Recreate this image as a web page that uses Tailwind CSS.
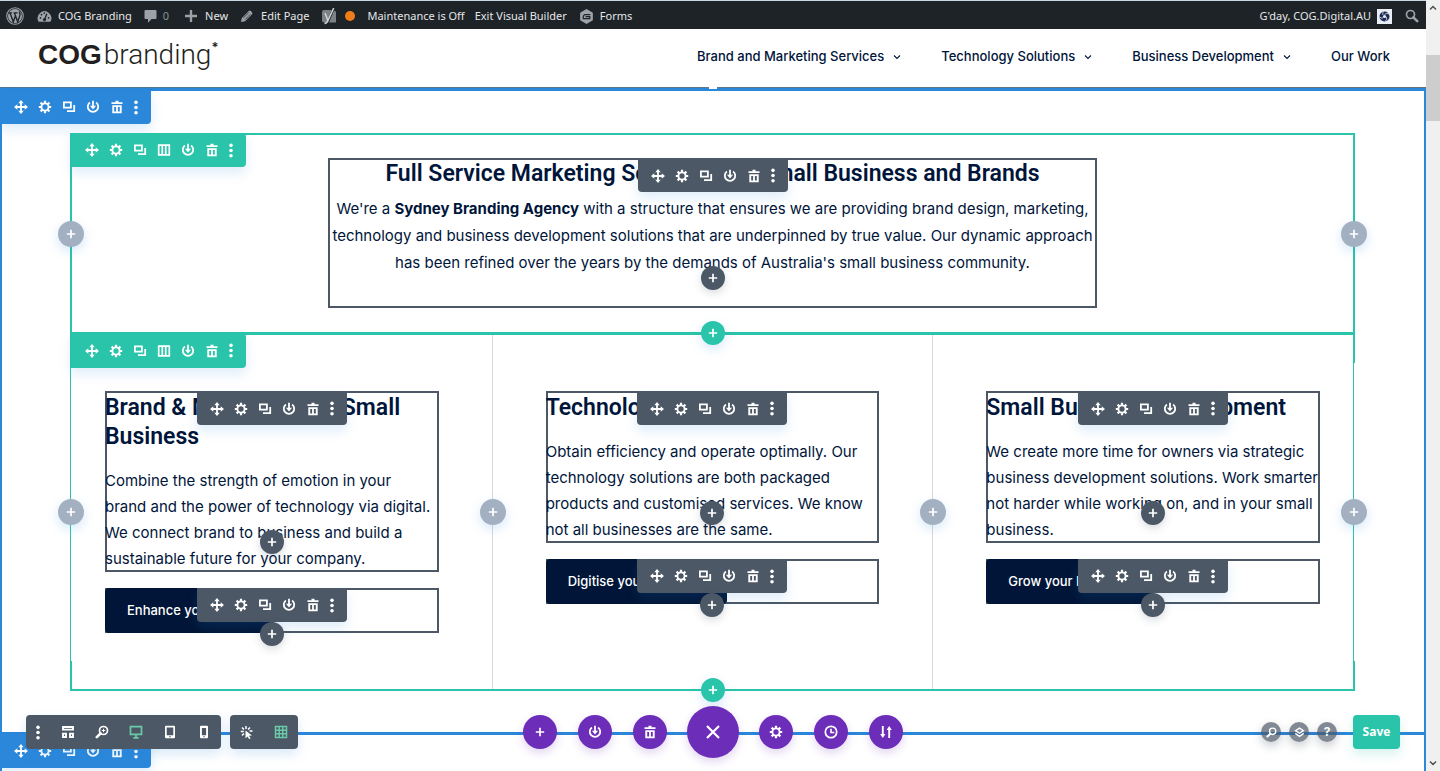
<!DOCTYPE html>
<html lang="en">
<head>
<meta charset="utf-8">
<meta name="viewport" content="width=device-width, initial-scale=1">
<title>COG Branding</title>
<script src="https://cdn.jsdelivr.net/npm/@tailwindcss/browser@4"></script>
</head>
<body class="flex h-screen overflow-hidden bg-white font-['Inter',sans-serif] text-[#00153a]">

<svg class="hidden" aria-hidden="true">
  <symbol id="move" viewBox="0 0 14 14"><path d="M7 2v10M2 7h10" stroke="currentColor" stroke-width="1.8"/><path d="M7 0l2.7 3.3H4.3zM7 14l2.700-3.300H4.300zM0 7l3.300-2.700v5.400zM14 7l-3.300-2.700v5.400z" fill="currentColor"/></symbol>
  <symbol id="gear" viewBox="0 0 14 14"><circle cx="7" cy="7" r="3.600" fill="none" stroke="currentColor" stroke-width="1.900"/><path d="M7 .8v2.400M7 10.800v2.400M.8 7h2.400M10.800 7h2.400M2.600 2.600l1.700 1.700M9.700 9.700l1.700 1.700M2.600 11.400l1.700-1.700M9.700 4.300l1.700-1.700" stroke="currentColor" stroke-width="2.200"/></symbol>
  <symbol id="copy" viewBox="0 0 14 14"><path d="M1.900 2.400h7v5.200h-7z" fill="none" stroke="currentColor" stroke-width="1.800"/><path d="M5 11.200h7.200V5" fill="none" stroke="currentColor" stroke-width="1.800"/></symbol>
  <symbol id="cols" viewBox="0 0 14 14"><path d="M1.700 2.200h10.600v9.600H1.700zM5.300 2v10M8.700 2v10" fill="none" stroke="currentColor" stroke-width="1.700"/></symbol>
  <symbol id="power" viewBox="0 0 14 14"><path d="M3.900 2.500a5.200 5.200 0 1 0 6.200 0" fill="none" stroke="currentColor" stroke-width="1.800"/><path d="M7 .8v6" stroke="currentColor" stroke-width="1.800"/><path d="M3.900 5.800h6.200L7 9.600z" fill="currentColor"/></symbol>
  <symbol id="trash" viewBox="0 0 14 14"><path d="M5.500.8h3v1.400h4v1.900h-11V2.200h4z" fill="currentColor"/><path d="M2.300 5.300h9.400v8H2.300zM4.200 7.100v4.400h1.900V7.100zM7.900 7.100v4.400h1.900V7.100z" fill="currentColor" fill-rule="evenodd"/></symbol>
  <symbol id="dots" viewBox="0 0 6 16"><circle cx="3" cy="2.500" r="1.900" fill="currentColor"/><circle cx="3" cy="8" r="1.900" fill="currentColor"/><circle cx="3" cy="13.500" r="1.900" fill="currentColor"/></symbol>
  <symbol id="plus" viewBox="0 0 10 10"><path d="M5 .8v8.400M.8 5h8.400" stroke="currentColor" stroke-width="1.700"/></symbol>
  <symbol id="chev" viewBox="0 0 8 8"><path d="M1 2.500l3 3 3-3" fill="none" stroke="currentColor" stroke-width="1.100"/></symbol>
  <symbol id="lens" viewBox="0 0 14 14"><circle cx="8.500" cy="5.500" r="4" fill="none" stroke="currentColor" stroke-width="1.700"/><path d="M5.600 8.400L1.800 12.200" stroke="currentColor" stroke-width="2.600" stroke-linecap="round"/></symbol>
</svg>

<div class="relative flex min-w-0 flex-1 flex-col">

  <!-- Admin bar -->
  <nav class="flex h-[29px] shrink-0 items-center justify-between border-t border-[#c9d6e4] bg-[#1d2327] pt-0.5 pr-[7px] pl-1.5 font-['Noto_Sans',sans-serif] text-[11px] text-[#e6e7e8]">
    <div class="flex items-center">
      <a href="#" aria-label="WordPress" class="text-[#9ca2a7]"><svg class="h-[18px] w-[18px]" viewBox="0 0 20 20"><circle cx="10" cy="10" r="9.200" fill="none" stroke="currentColor" stroke-width="1.200"/><circle cx="10" cy="10" r="7.800" fill="currentColor"/><path d="M2.800 6.500h4M8.400 6.500h4.400M4.400 6.500l3.700 10 2-6M9.300 6.500l3.700 10 2.500-7.500c.5-2-.8-2.500-.8-4" fill="none" stroke="#1d2327" stroke-width="1.500"/></svg></a>
      <a href="#" class="ml-[13px] flex items-center gap-1.5"><svg class="h-[15px] w-[15px] text-[#9ca2a7]" viewBox="0 0 16 16"><path d="M1.700 13.500A7.300 7.300 0 1 1 14.300 13.500z" fill="currentColor"/><path d="M8 11.500L10.500 5" stroke="#1d2327" stroke-width="1.400"/><circle cx="8" cy="11.300" r="1.700" fill="#1d2327"/><g fill="#1d2327"><circle cx="3.700" cy="9.500" r=".9"/><circle cx="4.800" cy="6" r=".9"/><circle cx="7.800" cy="4.300" r=".9"/><circle cx="12.300" cy="9.500" r=".9"/></g></svg>COG Branding</a>
      <a href="#" class="ml-3 flex items-center gap-1.5 text-[#8b9196]"><svg class="h-[13px] w-[13px] text-[#9ca2a7]" viewBox="0 0 13 13"><path d="M1.500 0h10q1 0 1 1v7q0 1-1 1H7.500L4 12.800V9H1.500q-1 0-1-1V1q0-1 1-1z" fill="currentColor"/></svg>0</a>
      <a href="#" class="ml-4 flex items-center gap-2"><svg class="h-3 w-3 text-[#9ca2a7]" viewBox="0 0 10 10"><path d="M5 0v10M0 5h10" stroke="currentColor" stroke-width="2"/></svg>New</a>
      <a href="#" class="ml-3 flex items-center gap-2"><svg class="h-[13px] w-[13px] text-[#9ca2a7]" viewBox="0 0 14 14"><path d="M1 13l1-4.500L9.500 1q1.200-.8 2.200.2l1.100 1.100q1 1 .2 2.200L5.500 12z" fill="currentColor"/><path d="M3.600 8.600L9.500 2.700M5.400 10.400l5.900-5.900" stroke="#1d2327" stroke-width=".8"/></svg>Edit Page</a>
      <a href="#" aria-label="Yoast SEO" class="ml-3 flex items-center gap-2"><svg class="h-[17px] w-4 text-[#9ca2a7]" viewBox="0 0 16 17"><path d="M3 2h7.500L6 14.500H3q-2 0-2-2V4q0-2 2-2zM13 2.500q2 .5 2 2v10H8z" fill="currentColor" opacity=".75"/><path d="M4 5l3 7.500L12.700 0M7 12q-1 3.500-3.500 3.500" fill="none" stroke="#cfd2d4" stroke-width="1.500"/></svg><span class="h-2.5 w-2.5 rounded-full bg-[#ee7c1b]"></span></a>
      <a href="#" class="ml-3">Maintenance is Off</a>
      <a href="#" class="ml-2.5">Exit Visual Builder</a>
      <a href="#" class="ml-3 flex items-center gap-1.5"><svg class="h-[15px] w-[15px]" viewBox="0 0 16 16"><path d="M8 0l6.800 4v8L8 16l-6.800-4V4z" fill="#9ca2a7"/><path d="M12 6H6.500Q4.500 6 4.500 10.300h7V8.200H7" fill="none" stroke="#1d2327" stroke-width="1.300"/></svg>Forms</a>
    </div>
    <div class="flex items-center">
      <a href="#" class="flex items-center gap-1.5">G'day, COG.Digital.AU <svg class="h-[15px] w-[15px]" viewBox="0 0 15 15"><path d="M0 0h15v15H0z" fill="#e9eef6"/><circle cx="7.500" cy="7.500" r="5" fill="#1b2b52"/><circle cx="7.500" cy="7.500" r="1.600" fill="#e9eef6"/><path d="M7.500 5.500q2-2 4.500-.5M9.400 8q1.200 2.500-1 4M6 9Q3.500 9.800 2.600 7.500M6 6Q5 4 6.500 2.500" fill="none" stroke="#e9eef6" stroke-width=".8"/></svg></a>
      <button aria-label="Search" class="ml-[13px] text-[#9ca2a7]"><svg class="h-3.5 w-3.5 -scale-x-100" viewBox="0 0 14 14"><use href="#lens"/></svg></button>
    </div>
  </nav>

  <!-- Site header -->
  <header class="z-10 flex h-[58px] shrink-0 items-center justify-between bg-white pr-9 pb-0.5 pl-[38px]">
    <a href="#" class="flex items-baseline pb-1 text-[28px] leading-none text-[#231f20]"><span class="font-['Liberation_Sans',sans-serif] font-bold">COG</span><span class="ml-0.5 font-['Roboto',sans-serif] font-light">branding</span><span class="self-start text-[13px] leading-none font-semibold">*</span></a>
    <nav class="flex items-center gap-10 text-[13px] font-medium">
      <a href="#" class="flex items-center gap-[9px]">Brand and Marketing Services <svg class="h-2 w-2"><use href="#chev"/></svg></a>
      <a href="#" class="flex items-center gap-[9px]">Technology Solutions <svg class="h-2 w-2"><use href="#chev"/></svg></a>
      <a href="#" class="flex items-center gap-[9px]">Business Development <svg class="h-2 w-2"><use href="#chev"/></svg></a>
      <a href="#">Our Work</a>
    </nav>
  </header>

  <main class="flex min-h-0 flex-1 flex-col">
    <section class="relative shrink-0 border-x-2 border-t-4 border-[#2b87da] pt-[42px] pr-[69px] pb-[41px] pl-[68px]">
      <span class="absolute -inset-x-0.5 -top-1 h-px bg-linear-to-r from-[#4d7896] via-[#5f7788] to-[#66727a]"></span>
      <span class="absolute -top-1 left-1/2 h-0.5 w-2 -translate-x-1/2 bg-white"></span>
      <div data-tools="section" class="absolute -top-px -left-0.5 z-10 flex h-[34px] items-center rounded-br-sm bg-[#2b87da] pr-2 pl-[9px] text-white shadow-[0_6px_12px_rgba(43,135,218,.15)]"></div>

      <!-- Intro row -->
      <div class="relative border-x-2 border-t-2 border-b border-[#29c4a9] pt-[23px] pb-6">
        <div data-tools="row" class="absolute -top-0.5 -left-px z-10 flex h-[34px] items-center rounded-r-sm bg-[#29c4a9] pr-2 pl-[9px] text-white shadow-[0_6px_12px_rgba(43,135,218,.15)]"></div>
        <button data-add class="absolute top-1/2 -left-3.5 z-10 flex h-[26px] w-[26px] -translate-y-1/2 items-center justify-center rounded-full bg-[#a2b0c1] text-white shadow-[0_4px_12px_rgba(43,135,218,.2)]"></button>
        <button data-add class="absolute top-1/2 -right-3.5 z-10 flex h-[26px] w-[26px] -translate-y-1/2 items-center justify-center rounded-full bg-[#a2b0c1] text-white shadow-[0_4px_12px_rgba(43,135,218,.2)]"></button>
        <article class="relative mx-auto h-[150px] w-3/5 text-center ring-2 ring-[#4c5866] ring-inset">
          <h2 class="font-['Roboto',sans-serif] text-[23px] leading-[32px] font-semibold">Full Service Marketing Solutions for Small Business and Brands</h2>
          <p class="pt-[5px] text-[15px] leading-[27px]">We're a <strong>Sydney Branding Agency</strong> with a structure that ensures we are providing brand design, marketing,<br>technology and business development solutions that are underpinned by true value. Our dynamic approach<br>has been refined over the years by the demands of Australia's small business community.</p>
          <div data-tools="module" class="absolute top-px left-1/2 flex h-[33px] -translate-x-1/2 items-center rounded-b-sm bg-[#4c5866] pr-2 pl-2 text-white shadow-[0_6px_12px_rgba(43,135,218,.15)]"></div>
          <button data-add class="absolute bottom-[18px] left-1/2 flex h-6 w-6 -translate-x-1/2 items-center justify-center rounded-full bg-[#4c5866] text-white shadow-[0_3px_8px_rgba(60,70,90,.2)]"></button>
        </article>
        <button data-add class="absolute -bottom-[13px] left-1/2 z-20 flex h-6 w-6 -translate-x-1/2 items-center justify-center rounded-full bg-[#29c4a9] text-white shadow-[0_4px_12px_rgba(43,135,218,.2)]"></button>
      </div>

      <!-- Services row -->
      <div class="relative border-2 border-[#29c4a9] px-[33px] py-14">
        <span class="absolute inset-y-7 -left-px w-px bg-white"></span>
        <span class="absolute inset-y-7 -right-0.5 w-px bg-white"></span>
        <div data-tools="row" class="absolute -top-0.5 -left-px z-10 flex h-[35px] items-center rounded-r-sm bg-[#29c4a9] pr-2 pl-[9px] text-white shadow-[0_6px_12px_rgba(43,135,218,.15)]"></div>
        <button data-add class="absolute top-1/2 -left-3.5 z-10 flex h-[26px] w-[26px] -translate-y-1/2 items-center justify-center rounded-full bg-[#a2b0c1] text-white shadow-[0_4px_12px_rgba(43,135,218,.2)]"></button>
        <button data-add class="absolute top-1/2 -right-3.5 z-10 flex h-[26px] w-[26px] -translate-y-1/2 items-center justify-center rounded-full bg-[#a2b0c1] text-white shadow-[0_4px_12px_rgba(43,135,218,.2)]"></button>

        <div class="grid grid-cols-3 gap-[107px]">
          <div class="relative flex flex-col gap-4">
            <span class="absolute -inset-y-14 -right-[54px] w-px bg-[#d8d8d8]"></span>
            <button data-add class="absolute top-[108px] -right-[67px] flex h-[26px] w-[26px] items-center justify-center rounded-full bg-[#a2b0c1] text-white shadow-[0_4px_12px_rgba(43,135,218,.2)]"></button>
            <article class="relative pt-0.5 ring-2 ring-[#4c5866] ring-inset">
              <h3 class="font-['Roboto',sans-serif] text-[23px] leading-[29px] font-semibold">Brand &amp; Marketing For Small Business</h3>
              <p class="pt-[17px] text-[15px] leading-[26px]">Combine the strength of emotion in your<br>brand and the power of technology via digital.<br>We connect brand to business and build a<br>sustainable future for your company.</p>
              <div data-tools="module" class="absolute top-px left-1/2 flex h-[33px] -translate-x-1/2 items-center rounded-b-sm bg-[#4c5866] pr-2 pl-2 text-white shadow-[0_6px_12px_rgba(43,135,218,.15)]"></div>
              <button data-add class="absolute bottom-[18px] left-1/2 flex h-6 w-6 -translate-x-1/2 items-center justify-center rounded-full bg-[#4c5866] text-white shadow-[0_3px_8px_rgba(60,70,90,.2)]"></button>
            </article>
            <article class="relative flex h-[45px] ring-2 ring-[#4c5866] ring-inset">
              <a href="#" class="flex items-center rounded-sm bg-[#001537] px-[22px] text-[13px] font-medium text-white">Enhance your Brand</a>
              <div data-tools="module" class="absolute top-0 left-1/2 flex h-[34px] -translate-x-1/2 items-center rounded-b-sm bg-[#4c5866] pr-2 pl-2 text-white shadow-[0_6px_12px_rgba(43,135,218,.15)]"></div>
              <button data-add class="absolute -bottom-[13px] left-1/2 flex h-6 w-6 -translate-x-1/2 items-center justify-center rounded-full bg-[#4c5866] text-white shadow-[0_3px_8px_rgba(60,70,90,.2)]"></button>
            </article>
          </div>

          <div class="relative flex flex-col gap-4">
            <span class="absolute -inset-y-14 -right-[54px] w-px bg-[#d8d8d8]"></span>
            <button data-add class="absolute top-[108px] -right-[67px] flex h-[26px] w-[26px] items-center justify-center rounded-full bg-[#a2b0c1] text-white shadow-[0_4px_12px_rgba(43,135,218,.2)]"></button>
            <article class="relative pt-0.5 ring-2 ring-[#4c5866] ring-inset">
              <h3 class="font-['Roboto',sans-serif] text-[23px] leading-[29px] font-semibold">Technology Solutions</h3>
              <p class="pt-[17px] text-[15px] leading-[26px]">Obtain efficiency and operate optimally. Our<br>technology solutions are both packaged<br>products and customised services. We know<br>not all businesses are the same.</p>
              <div data-tools="module" class="absolute top-px left-1/2 flex h-[33px] -translate-x-1/2 items-center rounded-b-sm bg-[#4c5866] pr-2 pl-2 text-white shadow-[0_6px_12px_rgba(43,135,218,.15)]"></div>
              <button data-add class="absolute bottom-[18px] left-1/2 flex h-6 w-6 -translate-x-1/2 items-center justify-center rounded-full bg-[#4c5866] text-white shadow-[0_3px_8px_rgba(60,70,90,.2)]"></button>
            </article>
            <article class="relative flex h-[45px] ring-2 ring-[#4c5866] ring-inset">
              <a href="#" class="flex items-center rounded-sm bg-[#001537] px-[22px] text-[13px] font-medium text-white">Digitise your Business</a>
              <div data-tools="module" class="absolute top-0 left-1/2 flex h-[34px] -translate-x-1/2 items-center rounded-b-sm bg-[#4c5866] pr-2 pl-2 text-white shadow-[0_6px_12px_rgba(43,135,218,.15)]"></div>
              <button data-add class="absolute -bottom-[13px] left-1/2 flex h-6 w-6 -translate-x-1/2 items-center justify-center rounded-full bg-[#4c5866] text-white shadow-[0_3px_8px_rgba(60,70,90,.2)]"></button>
            </article>
          </div>

          <div class="relative flex flex-col gap-4">
            <article class="relative pt-0.5 ring-2 ring-[#4c5866] ring-inset">
              <h3 class="font-['Roboto',sans-serif] text-[23px] leading-[29px] font-semibold">Small Business Development</h3>
              <p class="pt-[17px] text-[15px] leading-[26px] whitespace-nowrap">We create more time for owners via strategic<br>business development solutions. Work smarter<br>not harder while working on, and in your small<br>business.</p>
              <div data-tools="module" class="absolute top-px left-1/2 flex h-[33px] -translate-x-1/2 items-center rounded-b-sm bg-[#4c5866] pr-2 pl-2 text-white shadow-[0_6px_12px_rgba(43,135,218,.15)]"></div>
              <button data-add class="absolute bottom-[18px] left-1/2 flex h-6 w-6 -translate-x-1/2 items-center justify-center rounded-full bg-[#4c5866] text-white shadow-[0_3px_8px_rgba(60,70,90,.2)]"></button>
            </article>
            <article class="relative flex h-[45px] ring-2 ring-[#4c5866] ring-inset">
              <a href="#" class="flex items-center rounded-sm bg-[#001537] px-[22px] text-[13px] font-medium text-white">Grow your Business</a>
              <div data-tools="module" class="absolute top-0 left-1/2 flex h-[34px] -translate-x-1/2 items-center rounded-b-sm bg-[#4c5866] pr-2 pl-2 text-white shadow-[0_6px_12px_rgba(43,135,218,.15)]"></div>
              <button data-add class="absolute -bottom-[13px] left-1/2 flex h-6 w-6 -translate-x-1/2 items-center justify-center rounded-full bg-[#4c5866] text-white shadow-[0_3px_8px_rgba(60,70,90,.2)]"></button>
            </article>
          </div>
        </div>
        <button data-add class="absolute -bottom-[13px] left-1/2 z-20 flex h-6 w-6 -translate-x-1/2 items-center justify-center rounded-full bg-[#29c4a9] text-white shadow-[0_4px_12px_rgba(43,135,218,.2)]"></button>
      </div>
    </section>

    <section class="relative min-h-0 flex-1 border-x-2 border-t-[3px] border-[#2b87da]">
      <div data-tools="section" class="absolute -top-px -left-0.5 flex h-[34px] items-center rounded-br-sm bg-[#2b87da] pr-2 pl-[9px] text-white shadow-[0_6px_12px_rgba(43,135,218,.15)]"></div>
    </section>
  </main>

  <!-- Builder bar floating over the page -->
  <footer class="absolute inset-x-0 bottom-[13px] z-30 flex h-[52px] items-center pr-[26px] pl-[26px] text-white">
    <div class="flex flex-1 items-center gap-[9px]">
      <div class="flex h-[34px] items-center rounded-sm bg-[#4c5866] pl-1.5 shadow-[0_5px_12px_rgba(43,135,218,.18)]">
        <button aria-label="More" class="flex w-3 justify-center"><svg class="h-[15px] w-1.5"><use href="#dots"/></svg></button>
        <button aria-label="Wireframe view" class="ml-[7px] flex w-[34px] justify-center"><svg class="h-3.5 w-3.5" viewBox="0 0 14 14"><path d="M2 2h10v2.600H2zM2 8.600h3v3.400H2zM9 8.600h3v3.400H9z" fill="none" stroke="currentColor" stroke-width="1.900"/></svg></button>
        <button aria-label="Zoom" class="flex w-[34px] justify-center"><svg class="h-3.5 w-3.5" viewBox="0 0 14 14"><use href="#lens"/><path d="M8.500 3.800v3.400M6.800 5.500h3.400" stroke="currentColor" stroke-width="1"/></svg></button>
        <button aria-label="Desktop view" class="flex w-[34px] justify-center text-[#6ac9a6]"><svg class="h-3.5 w-3.5" viewBox="0 0 14 14"><path d="M1.500 1.700h11v7.600h-11z" fill="none" stroke="currentColor" stroke-width="1.700"/><path d="M7 9v3M4.300 12.800h5.400" stroke="currentColor" stroke-width="1.800"/></svg></button>
        <button aria-label="Tablet view" class="flex w-[34px] justify-center"><svg class="h-3.5 w-3.5" viewBox="0 0 14 14"><path d="M3 .7h8q1 0 1 1v10.600q0 1-1 1H3q-1 0-1-1V1.700q0-1 1-1zM3.700 2.400v7.800h6.600V2.400zM6.200 11.300v1h1.600v-1z" fill="currentColor" fill-rule="evenodd"/></svg></button>
        <button aria-label="Phone view" class="flex w-[34px] justify-center"><svg class="h-3.5 w-3.5" viewBox="0 0 14 14"><path d="M4 .7h6q1 0 1 1v10.600q0 1-1 1H4q-1 0-1-1V1.700q0-1 1-1zM4.900 2.900v7.400h4.200V2.900zM6.300 11.300v1h1.400v-1z" fill="currentColor" fill-rule="evenodd"/></svg></button>
      </div>
      <div class="flex h-[34px] items-center rounded-sm bg-[#4c5866] shadow-[0_5px_12px_rgba(43,135,218,.18)]">
        <button aria-label="Click mode" class="flex w-[34px] justify-center"><svg class="h-3.5 w-3.5" viewBox="0 0 14 14"><path d="M6 1v3M2 2.500l2 2M10 2.500l-2 2M.8 6.500h3M9.500 6h3M2 10.500l2-2" stroke="currentColor" stroke-width="1.500"/><path d="M5.500 5.500l6.500 5-3 .3 1.600 2.600-1.500.7-1.400-2.700-2.200 1.800z" fill="currentColor"/></svg></button>
        <button aria-label="Grid mode" class="flex w-[34px] justify-center text-[#6ac9a6]"><svg class="h-3.5 w-3.5" viewBox="0 0 14 14"><path d="M1.500 1.500h11v11h-11zM5.200 1v12M8.800 1v12M1 5.200h12M1 8.800h12" fill="none" stroke="currentColor" stroke-width="1.500"/></svg></button>
      </div>
    </div>
    <div class="flex items-center gap-[21px]">
      <button aria-label="Add" class="flex h-[34px] w-[34px] items-center justify-center rounded-full bg-[#6c2eb9] shadow-[0_4px_10px_rgba(108,46,185,.2)]"><svg class="h-2.5 w-2.5"><use href="#plus"/></svg></button>
      <button aria-label="Save to library" class="flex h-[34px] w-[34px] items-center justify-center rounded-full bg-[#6c2eb9] shadow-[0_4px_10px_rgba(108,46,185,.2)]"><svg class="h-3.5 w-3.5"><use href="#power"/></svg></button>
      <button aria-label="Clear layout" class="flex h-[34px] w-[34px] items-center justify-center rounded-full bg-[#6c2eb9] shadow-[0_4px_10px_rgba(108,46,185,.2)]"><svg class="h-3.5 w-3.5"><use href="#trash"/></svg></button>
      <button aria-label="Close" class="-mx-px flex h-[52px] w-[52px] items-center justify-center rounded-full bg-[#6c2eb9] shadow-[0_4px_10px_rgba(108,46,185,.2)]"><svg class="h-3.5 w-3.5" viewBox="0 0 14 14"><path d="M1 1l12 12M13 1L1 13" stroke="currentColor" stroke-width="2.200"/></svg></button>
      <button aria-label="Page settings" class="flex h-[34px] w-[34px] items-center justify-center rounded-full bg-[#6c2eb9] shadow-[0_4px_10px_rgba(108,46,185,.2)]"><svg class="h-3.5 w-3.5"><use href="#gear"/></svg></button>
      <button aria-label="History" class="flex h-[34px] w-[34px] items-center justify-center rounded-full bg-[#6c2eb9] shadow-[0_4px_10px_rgba(108,46,185,.2)]"><svg class="h-3.5 w-3.5" viewBox="0 0 14 14"><circle cx="7" cy="7" r="5.700" fill="none" stroke="currentColor" stroke-width="1.700"/><path d="M7 3.800v3.700h3.300" fill="none" stroke="currentColor" stroke-width="1.600"/></svg></button>
      <button aria-label="Portability" class="flex h-[34px] w-[34px] items-center justify-center rounded-full bg-[#6c2eb9] shadow-[0_4px_10px_rgba(108,46,185,.2)]"><svg class="h-3.5 w-3.5" viewBox="0 0 14 14"><path d="M3.800 1v9M10.200 13V4" stroke="currentColor" stroke-width="1.900"/><path d="M1.200 9h5.200L3.800 13zM7.600 5h5.200L10.200 1z" fill="currentColor"/></svg></button>
    </div>
    <div class="flex flex-1 items-center justify-end gap-2">
      <button aria-label="Search" class="flex h-5 w-5 items-center justify-center rounded-full bg-[#4c5866]/70 shadow-[0_4px_10px_rgba(40,50,70,.25)]"><svg class="h-[11px] w-[11px]"><use href="#lens"/></svg></button>
      <button aria-label="Layers" class="flex h-5 w-5 items-center justify-center rounded-full bg-[#4c5866]/70 shadow-[0_4px_10px_rgba(40,50,70,.25)]"><svg class="h-[11px] w-[11px]" viewBox="0 0 12 12"><path d="M6 1.200l4.300 2.800L6 6.800 1.700 4zM1.400 7L6 10.200 10.600 7" fill="none" stroke="currentColor" stroke-width="1.500"/></svg></button>
      <button class="flex h-5 w-5 items-center justify-center rounded-full bg-[#4c5866]/70 text-xs font-bold shadow-[0_4px_10px_rgba(40,50,70,.25)]">?</button>
      <button class="ml-2 h-[34px] w-[47px] rounded-sm bg-[#29c4a9] font-['Open_Sans',sans-serif] text-xs font-bold shadow-[0_5px_12px_rgba(41,196,169,.2)]">Save</button>
    </div>
  </footer>
</div>

<!-- Scroll track -->
<aside class="flex w-3.5 shrink-0 flex-col items-center bg-[#f0f0f0] pt-1 text-[#505050]">
  <svg class="h-2 w-2" viewBox="0 0 8 8"><path d="M1 5.500l3-3 3 3" fill="none" stroke="currentColor" stroke-width="1.500"/></svg>
  <div class="mt-[43px] h-[66px] w-full bg-[#cdcdcd]"></div>
  <svg class="mt-auto mb-1 h-2 w-2" viewBox="0 0 8 8"><path d="M1 2.500l3 3 3-3" fill="none" stroke="currentColor" stroke-width="1.500"/></svg>
</aside>

<script>
  // Fill every toolbar with its set of actions.
  const labels = {move: 'Move', gear: 'Settings', copy: 'Duplicate', cols: 'Columns', power: 'Save to library', trash: 'Delete'};
  document.querySelectorAll('[data-tools]').forEach(bar => {
    const names = Object.keys(labels).filter(n => n !== 'cols' || bar.dataset.tools === 'row');
    bar.innerHTML = names.map(n =>
      `<button aria-label="${labels[n]}" class="flex w-6 justify-center"><svg class="h-3.5 w-3.5"><use href="#${n}"/></svg></button>`).join('') +
      '<button aria-label="More" class="flex w-3.5 justify-center"><svg class="h-[15px] w-1.5"><use href="#dots"/></svg></button>';
  });
  document.querySelectorAll('[data-add]').forEach(b => {
    b.setAttribute('aria-label', 'Add');
    b.innerHTML = '<svg class="h-2.5 w-2.5"><use href="#plus"/></svg>';
  });
</script>
</body>
</html>
